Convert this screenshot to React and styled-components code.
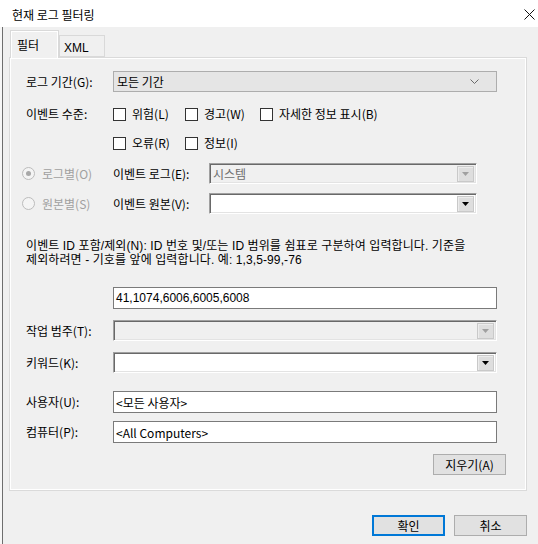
import { createGlobalStyle, styled } from "styled-components";

const GlobalStyle = createGlobalStyle`
  html, body {
    margin: 0;
    padding: 0;
    background: #f0f0f0;
  }
  body {
    font-family: "Noto Sans CJK KR", "Malgun Gothic", sans-serif;
    font-size: 12px;
    color: #000;
  }
  * {
    box-sizing: border-box;
  }
`;

const Window = styled.div`
  width: 538px;
  height: 544px;
  display: flex;
  flex-direction: column;
  background: #f7f7f7;
  overflow: hidden;
`;

const TitleBar = styled.div`
  height: 27px;
  flex-shrink: 0;
  background: #fff;
  display: flex;
  align-items: center;
  justify-content: space-between;
  padding: 1px 3px 0 12px;
`;

const Body = styled.div`
  flex: 1;
  margin-left: 2px;
  border-left: 1px solid #6e6e6e;
  background: #f0f0f0;
  padding: 3px 11px 0 6px;
  display: flex;
  flex-direction: column;
`;

const Tabs = styled.div`
  display: flex;
  align-items: flex-end;
  margin-left: 1px;
  margin-bottom: -1px;
  position: relative;
  z-index: 1;
`;

const Tab = styled.div`
  width: ${(p) => (p.$active ? "49px" : "46px")};
  height: ${(p) => (p.$active ? "28px" : "22px")};
  margin-bottom: ${(p) => (p.$active ? "0" : "1px")};
  border: 1px solid #d9d9d9;
  border-bottom: ${(p) => (p.$active ? "none" : "1px solid #d9d9d9")};
  background: #f0f0f0;
  box-shadow: ${(p) => (p.$active ? "inset 1px 1px 0 #fff, inset -1px 0 0 #fff" : "none")};
  display: flex;
  align-items: center;
  padding: ${(p) => (p.$active ? "0 0 0 6px" : "3px 0 0 4px")};
  font-family: ${(p) => (p.$active ? "inherit" : '"Liberation Sans", Arial, sans-serif')};
`;

const Panel = styled.div`
  width: 518px;
  height: 434px;
  border: 1px solid #dadada;
  box-shadow: inset 0 0 0 1px #fff;
  padding: 13px 0 0 16px;
  display: flex;
  flex-direction: column;
`;

const FieldRow = styled.div`
  display: grid;
  grid-template-columns: 87px 384px;
  align-items: center;
  margin-top: ${(p) => p.$top || 0}px;
`;

const Label = styled.span`
  white-space: nowrap;
  color: ${(p) => (p.$disabled ? "#a0a0a0" : "#000")};
  line-height: 16px;
`;

const ModernSelect = styled.div`
  height: 21px;
  background: #e5e5e5;
  border: 1px solid #adadad;
  display: flex;
  align-items: center;
  justify-content: space-between;
  padding: 0 17px 0 3px;
`;

const Combo = styled.div`
  width: ${(p) => p.$width || 384}px;
  height: 21px;
  background: ${(p) => (p.$disabled ? "#f0f0f0" : "#fff")};
  border: 1px solid;
  border-color: #a0a0a0 #fff #fff #a0a0a0;
  box-shadow: inset 1px 1px 0 #696969, inset -1px -1px 0 #e3e3e3;
  display: flex;
  align-items: center;
  justify-content: space-between;
  padding: 0 2px 0 3px;
  color: #6d6d6d;
`;

const ArrowButton = styled.div`
  width: 17px;
  height: 16px;
  margin-top: 1px;
  background: #dedede;
  border: 1px solid #c9c9c9;
  box-shadow: inset 1px 1px 0 #ececec;
  display: flex;
  align-items: center;
  justify-content: center;
`;

const TextBox = styled.div`
  height: 22px;
  background: #fff;
  border: 1px solid #7a7a7a;
  display: flex;
  align-items: center;
  padding-left: 2px;
  font-family: ${(p) => (p.$latin ? '"Liberation Sans", Arial, sans-serif' : "inherit")};
`;

const LevelRow = styled.div`
  display: grid;
  grid-template-columns: 87px auto;
  margin-top: 14px;
`;

const CheckGrid = styled.div`
  display: grid;
  grid-template-columns: 72px 75px auto;
  grid-auto-rows: 16px;
  row-gap: 13px;
`;

const CheckItem = styled.label`
  display: flex;
  align-items: center;
  gap: 6px;
  white-space: nowrap;
  line-height: 16px;
`;

const CheckBox = styled.span`
  width: 13px;
  height: 13px;
  border: 1px solid #333;
  background: #fff;
  flex-shrink: 0;
`;

const SourceRow = styled.div`
  display: grid;
  grid-template-columns: 91px 96px 268px;
  align-items: center;
  margin-left: -4px;
  margin-top: ${(p) => p.$top}px;
`;

const RadioItem = styled.span`
  display: flex;
  align-items: center;
  gap: 7px;
  color: #a0a0a0;
  white-space: nowrap;
`;

const Radio = styled.span`
  width: 13px;
  height: 13px;
  border-radius: 50%;
  border: 1px solid #bcbcbc;
  background: #f4f4f4;
  display: flex;
  align-items: center;
  justify-content: center;

  &::after {
    content: "";
    width: 5px;
    height: 5px;
    border-radius: 50%;
    background: ${(p) => (p.$checked ? "#a8a8a8" : "transparent")};
  }
`;

const Hint = styled.div`
  margin-top: 25px;
  display: flex;
  flex-direction: column;
  font-family: "Liberation Sans", "Noto Sans CJK KR", sans-serif;
  letter-spacing: 0.1px;
`;

const HintLine = styled.span`
  height: 14px;
  line-height: 14px;
  white-space: nowrap;
`;

const ClearRow = styled.div`
  width: 480px;
  display: flex;
  justify-content: flex-end;
  margin-top: 11px;
`;

const Button = styled.button`
  width: 73px;
  height: 21px;
  padding: 0;
  font: inherit;
  color: #000;
  background: #e1e1e1;
  border: ${(p) => (p.$primary ? "2px solid #0078d7" : "1px solid #adadad")};
`;

const Footer = styled.div`
  display: flex;
  justify-content: flex-end;
  gap: 9px;
  margin-top: 24px;
`;

function Chevron() {
  return (
    <svg width="9" height="5" viewBox="0 0 9 5">
      <polyline points="0.5,0.5 4.5,4.5 8.5,0.5" fill="none" stroke="#6a6a6a" strokeWidth="1" />
    </svg>
  );
}

function DropCombo({ disabled, width, text }) {
  return (
    <Combo $disabled={disabled} $width={width}>
      <span>{text}</span>
      <ArrowButton>
        <svg width="7" height="4" viewBox="0 0 7 4">
          <polygon points="0,0 7,0 3.5,4" fill={disabled ? "#a0a0a0" : "#000"} />
        </svg>
      </ArrowButton>
    </Combo>
  );
}

function Check({ label }) {
  return (
    <CheckItem>
      <CheckBox />
      {label}
    </CheckItem>
  );
}

export default function App() {
  return (
    <Window>
      <GlobalStyle />
      <TitleBar>
        <span>현재 로그 필터링</span>
        <svg width="11" height="11" viewBox="0 0 11 11">
          <path d="M0.5 0.5 L10.5 10.5 M10.5 0.5 L0.5 10.5" stroke="#111" strokeWidth="1" />
        </svg>
      </TitleBar>
      <Body>
        <Tabs>
          <Tab $active>필터</Tab>
          <Tab>XML</Tab>
        </Tabs>
        <Panel>
          <FieldRow>
            <Label>로그 기간(G):</Label>
            <ModernSelect>
              <span>모든 기간</span>
              <Chevron />
            </ModernSelect>
          </FieldRow>

          <LevelRow>
            <Label>이벤트 수준:</Label>
            <CheckGrid>
              <Check label="위험(L)" />
              <Check label="경고(W)" />
              <Check label="자세한 정보 표시(B)" />
              <Check label="오류(R)" />
              <Check label="정보(I)" />
            </CheckGrid>
          </LevelRow>

          <SourceRow $top={12}>
            <RadioItem>
              <Radio $checked />
              로그별(O)
            </RadioItem>
            <Label>이벤트 로그(E):</Label>
            <DropCombo disabled width={268} text="시스템" />
          </SourceRow>
          <SourceRow $top={9}>
            <RadioItem>
              <Radio />
              원본별(S)
            </RadioItem>
            <Label>이벤트 원본(V):</Label>
            <DropCombo width={268} />
          </SourceRow>

          <Hint>
            <HintLine>
              이벤트 ID 포함/제외(N): ID 번호 및/또는 ID 범위를 쉼표로 구분하여 입력합니다. 기준을
            </HintLine>
            <HintLine>제외하려면 - 기호를 앞에 입력합니다. 예: 1,3,5-99,-76</HintLine>
          </Hint>

          <FieldRow $top={20}>
            <span />
            <TextBox $latin>41,1074,6006,6005,6008</TextBox>
          </FieldRow>
          <FieldRow $top={11}>
            <Label>작업 범주(T):</Label>
            <DropCombo disabled />
          </FieldRow>
          <FieldRow $top={11}>
            <Label>키워드(K):</Label>
            <DropCombo />
          </FieldRow>
          <FieldRow $top={18}>
            <Label>사용자(U):</Label>
            <TextBox>&lt;모든 사용자&gt;</TextBox>
          </FieldRow>
          <FieldRow $top={8}>
            <Label>컴퓨터(P):</Label>
            <TextBox>&lt;All Computers&gt;</TextBox>
          </FieldRow>
          <ClearRow>
            <Button>지우기(A)</Button>
          </ClearRow>
        </Panel>
        <Footer>
          <Button $primary>확인</Button>
          <Button>취소</Button>
        </Footer>
      </Body>
    </Window>
  );
}
